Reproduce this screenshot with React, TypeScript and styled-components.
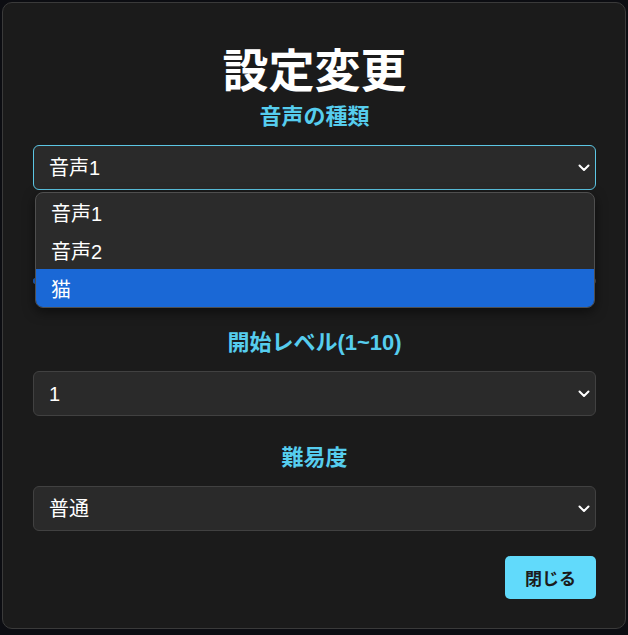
import React, { useState } from "react";
import styled, { createGlobalStyle } from "styled-components";

const GlobalStyle = createGlobalStyle`
  html, body {
    margin: 0;
    padding: 0;
    background: #0c0d12;
    font-family: "Liberation Sans", "Noto Sans CJK JP", sans-serif;
  }
  * { box-sizing: border-box; }
`;

const Backdrop = styled.div`
  padding: 2px;
  min-height: 100vh;
`;

const Modal = styled.div`
  background: #1b1b1b;
  border: 1px solid #3a3a3a;
  border-radius: 10px;
  padding: 40px 29px 29px 30px;
  display: flex;
  flex-direction: column;
  color: #fff;
`;

const Title = styled.h2`
  margin: 0 0 6px;
  text-align: center;
  font-size: 46px;
  line-height: 56px;
  font-weight: 700;
  color: #fff;
`;

const Section = styled.div<{ $last?: boolean }>`
  display: flex;
  flex-direction: column;
  margin-bottom: ${(p) => (p.$last ? "25px" : "30px")};
  position: relative;
`;

const Label = styled.h3`
  margin: 0 0 16px;
  text-align: center;
  font-size: 22px;
  line-height: 24px;
  font-weight: 700;
  color: #56cdee;
`;

const SelectWrap = styled.div`
  position: relative;
`;

const Select = styled.select<{ $focused?: boolean }>`
  appearance: none;
  width: 100%;
  height: 45px;
  padding: 0 15px;
  background: #2a2a2a;
  color: #fff;
  font-family: inherit;
  font-size: 20px;
  border: 1px solid ${(p) => (p.$focused ? "#5cc6e4" : "#414141")};
  border-radius: 6px;
  outline: none;
`;

const Chevron = styled.svg`
  position: absolute;
  right: 6px;
  top: 50%;
  margin-top: -4px;
  pointer-events: none;
`;

const OptionList = styled.ul`
  position: absolute;
  top: calc(100% + 2px);
  left: 2px;
  right: 1px;
  margin: 0;
  padding: 0;
  list-style: none;
  background: #2b2b2b;
  border: 1px solid #4f4f4f;
  border-radius: 8px;
  overflow: hidden;
  box-shadow: 0 4px 12px rgba(0, 0, 0, 0.5);
  z-index: 10;
`;

const OptionItem = styled.li<{ $active?: boolean }>`
  height: 38px;
  display: flex;
  align-items: center;
  padding: 0 15px;
  font-size: 20px;
  color: #fff;
  background: ${(p) => (p.$active ? "#1a68d6" : "transparent")};
`;

const SliderBox = styled.div`
  height: 41px;
  display: flex;
  align-items: center;
`;

const Track = styled.div`
  width: 100%;
  height: 6px;
  border-radius: 3px;
  background: #555;
  overflow: hidden;
`;

const Fill = styled.div`
  height: 100%;
  background: #1a68d6;
`;

const CloseButton = styled.button`
  align-self: flex-end;
  height: 43px;
  padding: 0 20px;
  background: #61dafb;
  color: #1b1b1b;
  border: none;
  border-radius: 5px;
  font-family: inherit;
  font-size: 17px;
  font-weight: 700;
  cursor: pointer;
`;

const ChevronIcon = () => (
  <Chevron width="12" height="8" viewBox="0 0 12 8">
    <path d="M1.5 1.5 L6 6 L10.5 1.5" fill="none" stroke="#fff" strokeWidth="2" strokeLinecap="round" strokeLinejoin="round" />
  </Chevron>
);

const voices = ["音声1", "音声2", "猫"];
const levels = ["1", "2", "3", "4", "5", "6", "7", "8", "9", "10"];
const difficulties = ["簡単", "普通", "難しい"];

const App = () => {
  const [voice, setVoice] = useState("音声1");
  const [level, setLevel] = useState("1");
  const [difficulty, setDifficulty] = useState("普通");
  const volume = 40;

  return (
    <>
      <GlobalStyle />
      <Backdrop>
        <Modal>
          <Title>設定変更</Title>

          <Section>
            <Label>音声の種類</Label>
            <SelectWrap>
              <Select $focused value={voice} onChange={(e) => setVoice(e.target.value)}>
                {voices.map((v) => (
                  <option key={v} value={v}>{v}</option>
                ))}
              </Select>
              <ChevronIcon />
              <OptionList>
                {voices.map((v) => (
                  <OptionItem key={v} $active={v === "猫"}>{v}</OptionItem>
                ))}
              </OptionList>
            </SelectWrap>
          </Section>

          <Section>
            <Label>音量</Label>
            <SliderBox>
              <Track>
                <Fill style={{ width: `${volume}%` }} />
              </Track>
            </SliderBox>
          </Section>

          <Section>
            <Label>開始レベル(1~10)</Label>
            <SelectWrap>
              <Select value={level} onChange={(e) => setLevel(e.target.value)}>
                {levels.map((l) => (
                  <option key={l} value={l}>{l}</option>
                ))}
              </Select>
              <ChevronIcon />
            </SelectWrap>
          </Section>

          <Section $last>
            <Label>難易度</Label>
            <SelectWrap>
              <Select value={difficulty} onChange={(e) => setDifficulty(e.target.value)}>
                {difficulties.map((d) => (
                  <option key={d} value={d}>{d}</option>
                ))}
              </Select>
              <ChevronIcon />
            </SelectWrap>
          </Section>

          <CloseButton>閉じる</CloseButton>
        </Modal>
      </Backdrop>
    </>
  );
};

export default App;
